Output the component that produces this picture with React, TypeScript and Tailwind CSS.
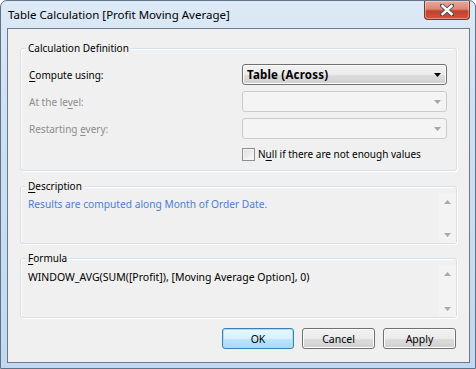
import type { ReactNode } from "react";

function Mn({ children }: { children: ReactNode }) {
    return <span className="underline underline-offset-[2px] decoration-[1px]">{children}</span>;
}

function Group({ label, className, children }: { label: ReactNode; className?: string; children?: ReactNode }) {
    return (
        <div
            className={
                "relative rounded-[3px] border border-[#d5dfe5] shadow-[inset_1px_1px_0_#ffffff,1px_1px_0_#ffffff] " +
                (className ?? "")
            }
        >
            <span className="absolute left-[5px] top-[-9px] bg-[#f0f0f0] px-[2px] leading-[16px]">{label}</span>
            {children}
        </div>
    );
}

function Caret({ color }: { color: string }) {
    return (
        <svg width="7" height="4" viewBox="0 0 7 4">
            <path d="M0 0h7L3.5 4z" fill={color} />
        </svg>
    );
}

function ComboActive({ value }: { value: string }) {
    return (
        <div className="flex h-[21px] w-[205px] items-center justify-between rounded-[3px] border border-[#707070] bg-[linear-gradient(#f2f2f2_0%,#ebebeb_50%,#dddddd_51%,#cfcfcf_100%)] pl-[4px] pr-[5px] shadow-[inset_0_0_0_1px_#fcfcfc]">
            <span className="text-[11.5px] font-bold leading-[16px] tracking-[0.2px]">{value}</span>
            <Caret color="#000000" />
        </div>
    );
}

function ComboDisabled() {
    return (
        <div className="flex h-[21px] w-[205px] items-center justify-end rounded-[3px] border border-[#c9cbcc] bg-[#f4f4f4] pr-[5px]">
            <Caret color="#a5a5a5" />
        </div>
    );
}

function ScrollCol() {
    return (
        <div className="flex w-[17px] flex-col justify-between bg-[#f3f3f3]">
            <div className="flex h-[17px] items-center justify-center">
                <svg width="7" height="4" viewBox="0 0 7 4">
                    <path d="M0 4h7L3.5 0z" fill="#a9a9a9" />
                </svg>
            </div>
            <div className="flex h-[17px] items-center justify-center">
                <Caret color="#a9a9a9" />
            </div>
        </div>
    );
}

function Button({ children, primary }: { children: ReactNode; primary?: boolean }) {
    return (
        <div
            className={
                "flex h-[21px] items-center justify-center rounded-[3px] border text-[10.5px] leading-[16px] " +
                (primary
                    ? "w-[72px] border-[#3c7fb1] bg-[linear-gradient(#eaf6fd_0%,#d9f0fc_50%,#bee6fd_51%,#a7d9f5_100%)] shadow-[inset_0_0_0_1px_#9fe3fb]"
                    : "w-[73px] border-[#707070] bg-[linear-gradient(#f2f2f2_0%,#ebebeb_50%,#dddddd_51%,#cfcfcf_100%)] shadow-[inset_0_0_0_1px_#fcfcfc]")
            }
        >
            {children}
        </div>
    );
}

export default function App() {
    return (
        <div className="h-[369px] w-[476px] text-[10px] text-black [font-family:'Noto_Sans',sans-serif]">
            <div className="relative flex h-full flex-col rounded-t-[7px] border border-[#5f7388] bg-[linear-gradient(#dde9f6_0%,#cfe0f3_30%,#c2d8f0_100%)] pb-[5px] pl-[6px] pr-[5px]">
                {/* Title bar */}
                <div className="h-[27px] pl-[1px] pt-[6px] text-[11.5px] leading-[16px]">Table Calculation [Profit Moving Average]</div>

                {/* Close button */}
                <div className="absolute right-[5px] top-0 flex h-[19px] w-[46px] items-center justify-center rounded-b-[4px] border border-t-0 border-[#7d3328] bg-[linear-gradient(#e9a99a_0%,#d98676_45%,#c2412c_55%,#d0543c_100%)] shadow-[inset_0_0_0_1px_rgba(255,255,255,0.35)]">
                    <svg width="14" height="12" viewBox="0 0 14 12">
                        <path d="M2 1.5L12 10.5M12 1.5L2 10.5" stroke="#4a4a55" strokeWidth="4.2" strokeLinecap="square" />
                        <path d="M2.5 2L11.5 10M11.5 2L2.5 10" stroke="#ffffff" strokeWidth="2.4" strokeLinecap="square" />
                    </svg>
                </div>

                {/* Client area */}
                <div className="flex flex-1 flex-col border border-[#6c7988] bg-[#f0f0f0] px-[12px] pt-[19px]">
                    <Group label="Calculation Definition" className="h-[123px]">
                        <div className="flex flex-col gap-[6px] pl-[8px] pr-[9px] pt-[15px]">
                            <div className="flex h-[21px] items-center justify-between">
                                <span className="leading-[16px]">
                                    <Mn>C</Mn>ompute using:
                                </span>
                                <ComboActive value="Table (Across)" />
                            </div>
                            <div className="flex h-[21px] items-center justify-between">
                                <span className="leading-[16px] text-[#8d8d8d]">
                                    At the le<Mn>v</Mn>el:
                                </span>
                                <ComboDisabled />
                            </div>
                            <div className="flex h-[21px] items-center justify-between">
                                <span className="leading-[16px] text-[#8d8d8d]">
                                    Restarting <Mn>e</Mn>very:
                                </span>
                                <ComboDisabled />
                            </div>
                            <div className="ml-auto mt-[1px] flex h-[16px] w-[205px] items-center gap-[3px]">
                                <div className="h-[13px] w-[13px] border border-[#8e8f8f] bg-[linear-gradient(135deg,#dcdcdc,#fbfbfb)] shadow-[inset_0_0_0_1px_#f4f4f4]" />
                                <span className="leading-[16px]">
                                    N<Mn>u</Mn>ll if there are not enough values
                                </span>
                            </div>
                        </div>
                    </Group>

                    <Group label={<><Mn>D</Mn>escription</>} className="mt-[15px] flex h-[58px] flex-col">
                        <div className="mt-[6px] flex flex-1">
                            <div className="flex-1 pl-[7px] pt-[3px] text-[10.2px] leading-[16px] text-[#4a7ed6]">
                                Results are computed along Month of Order Date.
                            </div>
                            <ScrollCol />
                        </div>
                    </Group>

                    <Group label={<><Mn>F</Mn>ormula</>} className="mt-[14px] flex h-[60px] flex-col">
                        <div className="mt-[6px] flex flex-1">
                            <div className="flex-1 pl-[7px] pt-[4px] text-[10.5px] leading-[16px]">
                                WINDOW_AVG(SUM([Profit]), [Moving Average Option], 0)
                            </div>
                            <ScrollCol />
                        </div>
                    </Group>

                    <div className="mr-[1px] mt-[10px] flex justify-end gap-[8px]">
                        <Button primary>OK</Button>
                        <Button>Cancel</Button>
                        <Button>Apply</Button>
                    </div>
                </div>
            </div>
        </div>
    );
}
